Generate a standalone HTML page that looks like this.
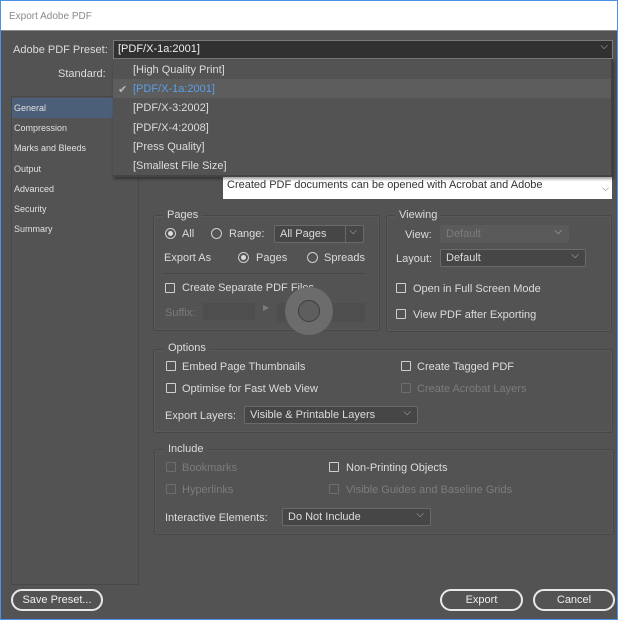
<!DOCTYPE html>
<html><head><meta charset="utf-8"><style>
*{box-sizing:border-box;margin:0;padding:0}
body{width:620px;height:621px;background:#fff;position:relative;overflow:hidden;font-family:"Liberation Sans","DejaVu Sans",sans-serif;font-size:11px;color:#dcdcdc}
.a{position:absolute;white-space:nowrap}
.win{position:absolute;left:0;top:0;width:618px;height:620px;border:1px solid #4d90e8;background:#535353}
.title{position:absolute;left:0;top:0;width:616px;height:30px;background:#fff;border-bottom:1px solid #8a8a8a;color:#8a8a8a;font-size:10px;padding:10px 8px}
.box{position:absolute;border:1px solid #474747;border-radius:3px;box-shadow:inset 0 0 0 1px #5a5a5a}
.leg{position:absolute;background:#535353;padding:0 4px;color:#dcdcdc;font-size:11px}
.cb{position:absolute;width:10px;height:10px;border:1px solid #cfcfcf;border-radius:1px}
.cb.d{border-color:#6e6e6e}
.rb{position:absolute;width:11px;height:11px;border:1px solid #cfcfcf;border-radius:50%}
.rb.on::after{content:"";position:absolute;left:2px;top:2px;width:5px;height:5px;border-radius:50%;background:#dcdcdc}
.sel{position:absolute;background:#464646;border:1px solid #6a6a6a;border-radius:2px;padding:2px 5px;height:18px}
.sel::after{content:"⌵";position:absolute;right:6px;top:0px;font-size:10px;color:#bbb}
.dim{color:#7c7c7c}
.side div{position:absolute;left:2px;font-size:9px;color:#e0e0e0}
.btn{position:absolute;height:22px;border:2px solid #e8e8e8;border-radius:11px;text-align:center;line-height:18px;color:#eee;font-size:11px}
</style></head><body>
<div class="win">
<div class="title">Export Adobe PDF</div>
<div class="a" style="left:12px;top:43px">Adobe PDF Preset:</div>
<div class="a" style="left:112px;top:39px;width:500px;height:19px;background:#313131;border:1px solid #7a7a7a;padding:2px 4px;color:#eee">[PDF/X-1a:2001]<span style="position:absolute;right:4px;top:0;font-size:10px;color:#bbb">⌵</span></div>
<div class="a" style="left:57px;top:67px">Standard:</div>

<div class="a side" style="left:10px;top:95px;width:128px;height:489px;border:1px solid #484848">
<div style="left:0;top:1px;width:101px;height:20px;background:#4b6078"></div>
<div style="top:6px">General</div><div style="top:26px">Compression</div><div style="top:46px">Marks and Bleeds</div><div style="top:67px">Output</div><div style="top:87px">Advanced</div><div style="top:107px">Security</div><div style="top:127px">Summary</div>
</div>

<div class="a" style="left:222px;top:162px;width:389px;height:36px;background:#fff;color:#333;padding:16px 4px 0">Created PDF documents can be opened with Acrobat and Adobe<span style="position:absolute;right:3px;top:20px;font-size:9px;color:#555">⌵</span></div>

<div class="a" style="left:112px;top:58px;width:500px;height:118px;background:#535353;border-right:2px solid #3f3f3f;border-bottom:2px solid #444;box-shadow:1px 2px 3px rgba(0,0,0,.4)">
<div style="position:absolute;left:0;top:20px;width:498px;height:19px;background:#5d5d5d"></div>
<div class="a" style="left:20px;top:5px">[High Quality Print]</div>
<div class="a" style="left:5px;top:24px;color:#bbb">✔</div>
<div class="a" style="left:20px;top:24px;color:#5a9ee8">[PDF/X-1a:2001]</div>
<div class="a" style="left:20px;top:43px">[PDF/X-3:2002]</div>
<div class="a" style="left:20px;top:63px">[PDF/X-4:2008]</div>
<div class="a" style="left:20px;top:82px">[Press Quality]</div>
<div class="a" style="left:20px;top:101px">[Smallest File Size]</div>
</div>

<!-- Pages -->
<div class="box" style="left:152px;top:214px;width:227px;height:116px"></div>
<div class="leg" style="left:162px;top:208px">Pages</div>
<div class="rb on" style="left:164px;top:227px"></div><div class="a" style="left:181px;top:227px">All</div>
<div class="rb" style="left:210px;top:227px"></div><div class="a" style="left:228px;top:227px">Range:</div>
<div class="sel" style="left:273px;top:224px;width:90px">All Pages<span style="position:absolute;left:70px;top:0;width:1px;height:16px;background:#6a6a6a"></span></div>
<div class="a" style="left:163px;top:251px">Export As</div>
<div class="rb on" style="left:237px;top:251px"></div><div class="a" style="left:255px;top:251px">Pages</div>
<div class="rb" style="left:306px;top:251px"></div><div class="a" style="left:323px;top:251px">Spreads</div>
<div class="a" style="left:162px;top:272px;width:202px;height:1px;background:#464646"></div>
<div class="cb" style="left:164px;top:282px"></div><div class="a" style="left:181px;top:281px">Create Separate PDF Files</div>
<div class="a dim" style="left:164px;top:306px">Suffix:</div>
<div class="a" style="left:202px;top:302px;width:52px;height:17px;background:#4e4e4e"></div>
<div class="a dim" style="left:262px;top:302px;font-size:8px">▶</div>
<div class="a" style="left:276px;top:302px;width:88px;height:19px;background:#4e4e4e"></div>
<div class="a" style="left:284px;top:286px;width:48px;height:48px;border-radius:50%;background:#6c6c6c"></div>
<div class="a" style="left:297px;top:299px;width:22px;height:22px;border-radius:50%;background:#5e5e5e;border:1px solid #3d3d3d"></div>

<!-- Viewing -->
<div class="box" style="left:385px;top:214px;width:226px;height:117px"></div>
<div class="leg" style="left:394px;top:208px">Viewing</div>
<div class="a" style="left:404px;top:228px">View:</div>
<div class="sel dim" style="left:439px;top:224px;width:129px;background:#5a5a5a;border-color:#5a5a5a">Default</div>
<div class="a" style="left:395px;top:252px">Layout:</div>
<div class="sel" style="left:439px;top:248px;width:146px">Default</div>
<div class="cb" style="left:395px;top:282px"></div><div class="a" style="left:412px;top:282px">Open in Full Screen Mode</div>
<div class="cb" style="left:395px;top:308px"></div><div class="a" style="left:412px;top:308px">View PDF after Exporting</div>

<!-- Options -->
<div class="box" style="left:152px;top:348px;width:460px;height:84px"></div>
<div class="leg" style="left:163px;top:341px">Options</div>
<div class="cb" style="left:165px;top:360px"></div><div class="a" style="left:181px;top:360px">Embed Page Thumbnails</div>
<div class="cb" style="left:165px;top:382px"></div><div class="a" style="left:181px;top:382px">Optimise for Fast Web View</div>
<div class="cb" style="left:400px;top:360px"></div><div class="a" style="left:416px;top:360px">Create Tagged PDF</div>
<div class="cb d" style="left:400px;top:382px"></div><div class="a dim" style="left:416px;top:382px">Create Acrobat Layers</div>
<div class="a" style="left:164px;top:409px">Export Layers:</div>
<div class="sel" style="left:243px;top:405px;width:174px">Visible &amp; Printable Layers</div>

<!-- Include -->
<div class="box" style="left:153px;top:448px;width:460px;height:86px"></div>
<div class="leg" style="left:163px;top:442px">Include</div>
<div class="cb d" style="left:165px;top:461px"></div><div class="a dim" style="left:181px;top:461px">Bookmarks</div>
<div class="cb d" style="left:165px;top:483px"></div><div class="a dim" style="left:181px;top:483px">Hyperlinks</div>
<div class="cb" style="left:328px;top:461px"></div><div class="a" style="left:345px;top:461px">Non-Printing Objects</div>
<div class="cb d" style="left:328px;top:483px"></div><div class="a dim" style="left:345px;top:483px">Visible Guides and Baseline Grids</div>
<div class="a" style="left:164px;top:511px">Interactive Elements:</div>
<div class="sel" style="left:281px;top:507px;width:149px">Do Not Include</div>

<div class="btn" style="left:10px;top:588px;width:92px">Save Preset...</div>
<div class="btn" style="left:439px;top:588px;width:83px">Export</div>
<div class="btn" style="left:532px;top:588px;width:82px">Cancel</div>
</div>
</body></html>
